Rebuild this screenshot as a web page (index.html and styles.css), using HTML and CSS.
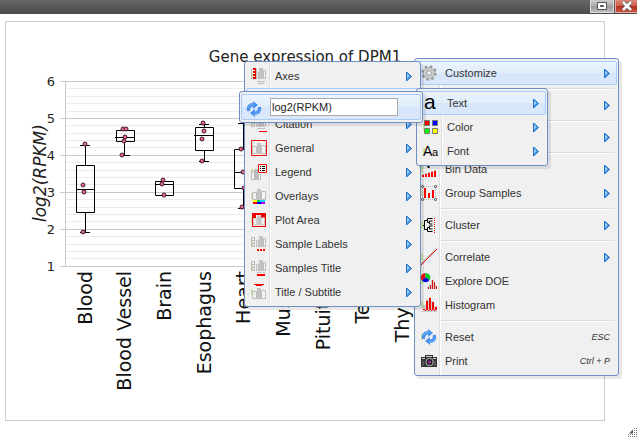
FILE: index.html
```html
<!DOCTYPE html>
<html lang="en">
<head>
<meta charset="utf-8">
<title>Gene expression of DPM1</title>
<link rel="stylesheet" href="styles.css">
</head>
<body>
<svg class="defs" aria-hidden="true">
  <defs>
    <symbol id="arrow" viewBox="0 0 6 9">
      <path d="M.5 0 5.500 4.500 .5 9Z" fill="#4b9bee" stroke="#1f6fc8" stroke-width="1"/>
      <path d="M1.500 2v4M2.500 3v2" stroke="#9accfa"/>
    </symbol>
    <symbol id="bars" viewBox="0 0 14 12">
      <path d="M.5 4.500h4v7h-4z" fill="#eee" stroke="#bdbdbd"/>
      <path d="M5 1h4v11H5z" fill="#c2c2c2"/>
      <path d="M9.500 3.500h4v8h-4z" fill="#f4f4f4" stroke="#bdbdbd"/>
    </symbol>
    <symbol id="bars-small" viewBox="0 0 10 11">
      <path d="M.5 4.500h2v6h-2z" fill="#eee" stroke="#bdbdbd"/>
      <path d="M3 0h4v11H3z" fill="#c2c2c2"/>
      <path d="M7.500 2.500h2v8h-2z" fill="#f4f4f4" stroke="#bdbdbd"/>
    </symbol>
    <symbol id="refresh" viewBox="0 0 16 16">
      <path d="M1 10C0 5 3 2 7 2V0l5 4-5 4V5.500C5 5.500 4 7 4 10Z" fill="#4990ef"/>
      <path d="M15 6c1 5-2 8-6 8v2l-5-4 5-4v2.500c2 0 3-1.500 3-4.500Z" fill="#4990ef"/>
      <path d="M2 7c1-3 3-4 6-4M14 9c-1 3-3 4-6 4" fill="none" stroke="#77b2fa"/>
    </symbol>
    <symbol id="axis" viewBox="0 0 6 12">
      <path d="M.5 1v10M3.500 1v10M1 1.500h2M1 4.500h2M1 7.500h2M1 10.500h2" fill="none" stroke="#bdbdbd"/>
    </symbol>
  </defs>
</svg>

<header class="titlebar">
  <button class="winbtn" aria-label="Restore">
    <svg width="12" height="10" viewBox="0 0 12 10"><path d="M1.500 1.500h9v7h-9z" fill="#fff" stroke="#555"/><path d="M4.500 4.500h3v1h-3z" fill="#888" stroke="#555"/></svg>
  </button>
  <button class="winbtn close" aria-label="Close">
    <svg width="12" height="10" viewBox="0 0 12 10"><path d="M2 1l8 8M10 1 2 9" stroke="#555" stroke-width="4"/><path d="M2 1l8 8M10 1 2 9" stroke="#fff" stroke-width="2.500"/></svg>
  </button>
</header>

<main class="panel">
  <svg class="chart" viewBox="6 22 598 398" role="img" aria-label="Box plot of log2(RPKM) by tissue">
    <text class="title" x="305" y="62" text-anchor="middle">Gene expression of DPM1</text>
    <path class="minor" d="M66 88.500H580M66 96.500H580M66 103.500H580M66 111.500H580M66 125.500H580M66 133.500H580M66 140.500H580M66 147.500H580M66 162.500H580M66 170.500H580M66 177.500H580M66 184.500H580M66 199.500H580M66 207.500H580M66 214.500H580M66 221.500H580M66 236.500H580M66 244.500H580M66 251.500H580M66 258.500H580"/>
    <path class="major" d="M60 81.500H580M60 118.500H580M60 155.500H580M60 192.500H580M60 229.500H580M60 266.500H580M65.500 81V267"/>
    <g class="tick" text-anchor="end">
      <text x="55" y="86">6</text><text x="55" y="123">5</text><text x="55" y="160">4</text>
      <text x="55" y="197">3</text><text x="55" y="234">2</text><text x="55" y="271">1</text>
    </g>
    <text class="ylabel" transform="translate(46 222) rotate(-90)">log2(RPKM)</text>

    <g class="box">
      <path d="M80 145.500h10M85.500 145v20M76.500 165.500h18v47h-18zM76 189.500h19M85.500 213v19M80 232.500h10"/>
      <path d="M116.500 130.500h18v11h-18zM115 137.500h19M124.500 142v13M120 155.500h10"/>
      <path d="M155.500 181.500h18v14h-18zM155 184.500h19"/>
      <path d="M199 124.500h10M204.500 124v3M195.500 127.500h18v23h-18zM194 135.500h20M204.500 151v10M199 161.500h10"/>
      <path d="M238 123.500h10M243.500 123v26M234.500 149.500h18v39h-18zM234 172.500h19M243.500 189v19M238 208.500h10"/>
    </g>
    <g class="points">
      <circle cx="85" cy="144" r="2"/><circle cx="83" cy="185" r="2"/><circle cx="84" cy="192" r="2"/><circle cx="83" cy="232" r="2"/>
      <circle cx="123" cy="129" r="2"/><circle cx="126" cy="129" r="2"/><circle cx="125" cy="137" r="2"/><circle cx="124" cy="141" r="2"/><circle cx="122" cy="155" r="2"/>
      <circle cx="163" cy="180" r="2"/><circle cx="162" cy="184" r="2"/><circle cx="164" cy="195" r="2"/>
      <circle cx="203" cy="123" r="2"/><circle cx="204" cy="131" r="2"/><circle cx="202" cy="139" r="2"/><circle cx="202" cy="161" r="2"/>
      <circle cx="241" cy="149" r="2"/><circle cx="243" cy="172" r="2"/><circle cx="244" cy="188" r="2"/><circle cx="242" cy="207" r="2"/>
    </g>
    <g class="category" text-anchor="end">
      <text transform="translate(92 271) rotate(-90)">Blood</text>
      <text transform="translate(131 271) rotate(-90)">Blood Vessel</text>
      <text transform="translate(171 271) rotate(-90)">Brain</text>
      <text transform="translate(211 271) rotate(-90)">Esophagus</text>
      <text transform="translate(250 271) rotate(-90)">Heart</text>
      <text transform="translate(290 271) rotate(-90)">Muscle</text>
      <text transform="translate(330 271) rotate(-90)">Pituitary</text>
      <text transform="translate(369 271) rotate(-90)">Testis</text>
      <text transform="translate(409 271) rotate(-90)">Thyroid</text>
    </g>
  </svg>
</main>

<ul class="menu menu-main">
  <li class="open">
    <button class="item">
      <svg class="icon" viewBox="0 0 16 16"><circle cx="8" cy="8" r="6.500" fill="none" stroke="#999" stroke-width="2.500" stroke-dasharray="2.500 2.600"/><circle cx="8" cy="8" r="4.500" fill="none" stroke="#9b9b9b" stroke-width="3"/><circle cx="8" cy="8" r="4.200" fill="none" stroke="#cfcfcf" stroke-width="2"/><circle cx="8" cy="8" r="2.300" fill="#f3f7fd" stroke="#999"/></svg>
      <span>Customize</span><svg class="arrow"><use href="#arrow"/></svg>
    </button>
    <ul class="menu menu-customize">
      <li><button class="item">
        <svg class="icon" viewBox="0 0 16 16"><path d="M.500 1v10M5.500 1v10" stroke="#bdbdbd"/><path d="M3 0v12" stroke="#e00" stroke-width="2" stroke-dasharray="2 1"/><path d="M4.500 0v11" stroke="#e00"/><use href="#bars-small" x="5" y="0" width="10" height="11"/><path d="M6 13.500h8M7 15.500h6" stroke="#bbb"/></svg>
        <span>Axes</span><svg class="arrow"><use href="#arrow"/></svg></button></li>
      <li class="open">
        <button class="item" aria-label="Axis titles"></button>
        <ul class="menu menu-text">
          <li class="open">
            <button class="item"><svg class="icon letter" viewBox="0 0 16 16"><text x="1" y="14" font-size="21">a</text></svg><span>Text</span><svg class="arrow"><use href="#arrow"/></svg></button>
            <div class="menu menu-input">
              <div class="field open">
                <svg class="icon"><use href="#refresh"/></svg>
                <input type="text" value="log2(RPKM)" aria-label="Axis title text">
              </div>
            </div>
          </li>
          <li><button class="item"><svg class="icon" viewBox="0 0 16 16"><g stroke="#777"><path d="M1.500 1.500h5v5h-5z" fill="red"/><path d="M9.500 1.500h5v5h-5z" fill="#00f"/><path d="M1.500 9.500h5v5h-5z" fill="#0f0"/><path d="M9.500 9.500h5v5h-5z" fill="#ff0"/></g></svg><span>Color</span><svg class="arrow"><use href="#arrow"/></svg></button></li>
          <li><button class="item"><svg class="icon letter" viewBox="0 0 16 16"><text x="0" y="13" font-size="14">A</text><text x="9" y="13" font-size="11">a</text></svg><span>Font</span><svg class="arrow"><use href="#arrow"/></svg></button></li>
        </ul>
      </li>
      <li><button class="item">
        <svg class="icon" viewBox="0 0 16 16"><use href="#axis" width="6" height="12"/><use href="#bars-small" x="5" y="0" width="10" height="11"/><path d="M6 12.500h8" stroke="#bbb"/><path d="M8 15.500h8" stroke="red"/></svg>
        <span>Citation</span><svg class="arrow"><use href="#arrow"/></svg></button></li>
      <li><button class="item">
        <svg class="icon" viewBox="0 0 16 16"><use href="#bars" x="1" y="2" width="14" height="12"/><path d="M.500 .500h15v15H.500z" fill="none" stroke="#e11"/></svg>
        <span>General</span><svg class="arrow"><use href="#arrow"/></svg></button></li>
      <li><button class="item">
        <svg class="icon" viewBox="0 0 16 16"><path d="M.500 7.500h3v8h-3z" fill="#eee" stroke="#bbb"/><path d="M3 5h4v11H3z" fill="#bbb"/><path d="M7.500 10.500h2v5h-2z" fill="#fff" stroke="#bbb"/><path d="M7.500 .500h8v8h-8z" fill="#fff" stroke="red"/><path d="M9 2.500h1M11 2.500h3M9 4.500h1M11 4.500h3M9 6.500h1M11 6.500h3" stroke="#000"/></svg>
        <span>Legend</span><svg class="arrow"><use href="#arrow"/></svg></button></li>
      <li><button class="item">
        <svg class="icon" viewBox="0 0 16 16"><use href="#bars" x="1" y="0" width="14" height="12"/><path d="M2 13h12" stroke="#0df" stroke-width="2"/><path d="M2 13h4" stroke="#ff0" stroke-width="2"/><path d="M6 13h3" stroke="#0c5" stroke-width="2"/><path d="M2 15h4" stroke="red" stroke-width="2"/><path d="M6 15h4" stroke="#00f" stroke-width="2"/><path d="M10 15h4" stroke="#a0f" stroke-width="2"/></svg>
        <span>Overlays</span><svg class="arrow"><use href="#arrow"/></svg></button></li>
      <li><button class="item">
        <svg class="icon" viewBox="0 0 16 16"><path d="M1 1h14v14H1z" fill="#e00"/><path d="M2 6h3V3h5v3h4v8H2z" fill="#eee"/><use href="#bars" x="2" y="2" width="12" height="12"/></svg>
        <span>Plot Area</span><svg class="arrow"><use href="#arrow"/></svg></button></li>
      <li><button class="item">
        <svg class="icon" viewBox="0 0 16 16"><use href="#axis" width="6" height="12"/><use href="#bars-small" x="5" y="0" width="10" height="11"/><path d="M6 14h8" stroke="red" stroke-width="2" stroke-dasharray="2 1"/></svg>
        <span>Sample Labels</span><svg class="arrow"><use href="#arrow"/></svg></button></li>
      <li><button class="item">
        <svg class="icon" viewBox="0 0 16 16"><use href="#axis" width="6" height="12"/><use href="#bars-small" x="5" y="0" width="10" height="11"/><path d="M6 12.500h8" stroke="#bbb" stroke-dasharray="2 1"/><path d="M6 15h8" stroke="red" stroke-width="2"/></svg>
        <span>Samples Title</span><svg class="arrow"><use href="#arrow"/></svg></button></li>
      <li><button class="item">
        <svg class="icon" viewBox="0 0 16 16"><use href="#bars" x="1" y="3" width="14" height="12"/><path d="M3 .500h10M5 1.500h6" stroke="red"/></svg>
        <span>Title / Subtitle</span><svg class="arrow"><use href="#arrow"/></svg></button></li>
    </ul>
  </li>
  <li class="sep" role="separator"></li>
  <li><button class="item" aria-label="Data"><svg class="arrow"><use href="#arrow"/></svg></button></li>
  <li class="sep" role="separator"></li>
  <li><button class="item" aria-label="Graph type"><svg class="arrow"><use href="#arrow"/></svg></button></li>
  <li class="sep" role="separator"></li>
  <li><button class="item">
    <svg class="icon" viewBox="0 0 16 16"><path d="M5 4h5M7.500 2v5" stroke="#000" stroke-width="2"/><path d="M1 13.500h2M4 12.500h2M7 11.500h2M10 10.500h2M13 9.500h2" stroke="#bbb"/><path d="M1 14h2v2H1zM4 13h2v3H4zM7 12h2v4H7zM10 11h2v5h-2zM13 10h2v6h-2z" fill="red"/></svg>
    <span>Bin Data</span><svg class="arrow"><use href="#arrow"/></svg></button></li>
  <li><button class="item">
    <svg class="icon" viewBox="0 0 16 16"><path d="M3 3h2v10H3zM7 8h2v5H7zM11 5h2v8h-2z" fill="red"/><path d="M1.500 3v10M3 14.500h10M14.500 3v10M3 1.500h10" stroke="#bbb" stroke-dasharray="1 1" fill="none"/><g fill="#fff" stroke="#333"><circle cx="1.500" cy="1.500" r="1"/><circle cx="14.500" cy="1.500" r="1"/><circle cx="1.500" cy="14.500" r="1"/><circle cx="14.500" cy="14.500" r="1"/></g></svg>
    <span>Group Samples</span><svg class="arrow"><use href="#arrow"/></svg></button></li>
  <li class="sep" role="separator"></li>
  <li><button class="item">
    <svg class="icon" viewBox="0 0 16 16"><path d="M2 8.500h2M6.500 3.500h-3v9h3M6.500 1.500v4M6.500 10.500v4M6.500 1.500h5M6.500 5.500h2v-1.500h3M8.500 5.500v1.500h3M6.500 10.500h2v-1.500h3M8.500 10.500v1.500h3M6.500 14.500h5" fill="none" stroke="#000"/><path d="M13.500 1v15" stroke="red" stroke-dasharray="1 1"/></svg>
    <span>Cluster</span><svg class="arrow"><use href="#arrow"/></svg></button></li>
  <li class="sep" role="separator"></li>
  <li><button class="item">
    <svg class="icon" viewBox="0 0 16 16"><path d="M0 15 15 0" stroke="#ccc" stroke-width="2"/><path d="M0 16 16 0" stroke="#d00"/></svg>
    <span>Correlate</span><svg class="arrow"><use href="#arrow"/></svg></button></li>
  <li><button class="item">
    <svg class="icon" viewBox="0 0 16 16"><path d="M4.500 4.500V0A4.500 4.500 0 0 0 1 7.500Z" fill="#e11"/><path d="M4.500 4.500V0A4.500 4.500 0 0 1 8.500 7Z" fill="#0c2"/><path d="M4.500 4.500 1 7.500a4.500 4.500 0 0 0 7.500-.500Z" fill="#00d"/><path d="M6.500 16v-3M8.500 16v-5M10.500 16v-9M12.500 16v-10M14.500 16v-5" stroke="#ccc"/><path d="M7.500 16v-2M9.500 16v-4M11.500 16v-9M13.500 16v-7M15.500 16v-3" stroke="#d11"/></svg>
    <span>Explore DOE</span></button></li>
  <li><button class="item">
    <svg class="icon" viewBox="0 0 16 16"><path d="M0 14h2V8h3V2h3V0h2v4h3v5h3v6H0z" fill="#ccc"/><path d="M2 14h2v-2H2zM5 14h2V4H5zM8 14h2V1H8zM11 14h2V5h-2zM14 14h2v-4h-2zM2 13h14v1H2z" fill="red"/></svg>
    <span>Histogram</span></button></li>
  <li class="sep" role="separator"></li>
  <li><button class="item"><svg class="icon"><use href="#refresh"/></svg><span>Reset</span><kbd>ESC</kbd></button></li>
  <li><button class="item">
    <svg class="icon" viewBox="0 0 16 16"><path d="M0 4h4V2h8v2h4v10H0z" fill="#333"/><path d="M1 5.500h3M12 5.500h3M5 3.500h6" stroke="#ccc"/><path d="M2 8v5M14 8v5" stroke="#777"/><circle cx="8.500" cy="9" r="3.700" fill="#222" stroke="#bbb"/><circle cx="8.500" cy="9" r="1.500" fill="#a3a"/></svg>
    <span>Print</span><kbd>Ctrl + P</kbd></button></li>
</ul>

<svg class="grip" width="9" height="9" viewBox="0 0 9 9" aria-hidden="true"><path d="M1 5.500 5 1.500v4z" fill="#555"/><path d="M6.500 0v9M0 6.500h9M0 8.500h9M8.500 0v9" stroke="#777" stroke-dasharray="1 1" fill="none"/></svg>
</body>
</html>
```
FILE: styles.css
```css
* { box-sizing: border-box; }

body {
  margin: 0;
  min-height: 100vh;
  position: relative;
  background: #fff;
  color: #333;
  font: 11px/14px "Liberation Sans", Arial, sans-serif;
}

.defs { position: absolute; width: 0; height: 0; }

.titlebar {
  display: flex;
  justify-content: flex-end;
  gap: 1px;
  height: 14px;
  background: linear-gradient(#666, #4a4a4a);
}

.winbtn {
  display: flex;
  align-items: center;
  justify-content: center;
  width: 24px;
  height: 13px;
  padding: 0;
  border: 1px solid #ddd;
  border-top: 0;
  background: linear-gradient(#ccc, #aaa 50%, #999 50%, #bbb);
}

.winbtn.close {
  width: 22px;
  border-color: #e7a9a0;
  border-right: 0;
  background: linear-gradient(#dc8a7c, #c95a48 50%, #b32f1c 50%, #c8553f);
}

.panel {
  margin: 7px 32px 16px 5px;
  border: 1px solid #ccc;
}

.chart {
  display: block;
  width: 100%;
  height: auto;
  fill: #222;
  font-family: "DejaVu Sans", Verdana, sans-serif;
}

.title { font-size: 15px; }
.tick { font-size: 13px; }
.ylabel { font-size: 17px; font-style: italic; }
.category { font-size: 19px; fill: #111; }
.minor { stroke: #ececec; }
.major { stroke: #c8c8c8; fill: none; }
.box { fill: none; stroke: #000; }
.points { fill: #f06a90; stroke: #3c1a28; }

.menu {
  position: absolute;
  z-index: 1;
  margin: 0;
  padding: 2px 1px;
  list-style: none;
  border: 1px solid #6d8fc4;
  border-radius: 3px;
  background: linear-gradient(90deg, #f0f0f0 24px, #e0e0e0 24px, #e0e0e0 25px, #fff 25px, #fff 26px, #f0f0f0 26px);
  box-shadow: 3px 3px 0 rgba(0, 0, 0, 0.09);
}

.menu li,
.field {
  border: 1px solid transparent;
  border-radius: 2px;
}

.menu .open {
  position: relative;
  border-color: #a9cbf5;
  background: linear-gradient(#eaf3fd, #e2edfb 50%, #d6e6fb 50%, #dae8fb);
}

.menu-main { left: 414px; top: 58px; width: 205px; }
.menu-customize { left: -173px; top: -1px; width: 177px; }
.menu-text { left: 169px; top: -1px; width: 132px; }
.menu-input { left: -180px; top: -1px; width: 184px; }

.item {
  display: flex;
  align-items: center;
  gap: 8px;
  width: 100%;
  height: 22px;
  padding: 0 6px 0 4px;
  border: 0;
  background: none;
  color: inherit;
  font: inherit;
  text-align: left;
}

.icon {
  flex: none;
  width: 16px;
  height: 16px;
  background: linear-gradient(#c5e3a0, #c5e3a0) 0 50% / 2px 6px no-repeat;
}

.open > .item > .icon,
.field > .icon { background: none; }

.letter { font-family: "Liberation Sans", Arial, sans-serif; fill: #000; overflow: visible; }

.arrow {
  width: 6px;
  height: 9px;
  margin-left: auto;
}

kbd {
  margin-left: auto;
  font: italic 9px/14px "Liberation Sans", Arial, sans-serif;
}

.menu .sep {
  height: 8px;
  padding: 2px 2px 0 24px;
}

.sep::before {
  content: "";
  display: block;
  height: 2px;
  background: linear-gradient(#dcdcdc 50%, #fff 50%);
}

.field {
  display: flex;
  align-items: center;
  gap: 8px;
  height: 26px;
  padding: 0 4px;
}

.field .icon { margin-top: 4px; }

.field input {
  width: 128px;
  height: 18px;
  padding: 0 1px;
  border: 1px solid #aaa;
  background: #fff;
  color: #222;
  font: 11px/16px "Liberation Sans", Arial, sans-serif;
}

.grip {
  position: absolute;
  right: 0;
  bottom: 0;
}
```
